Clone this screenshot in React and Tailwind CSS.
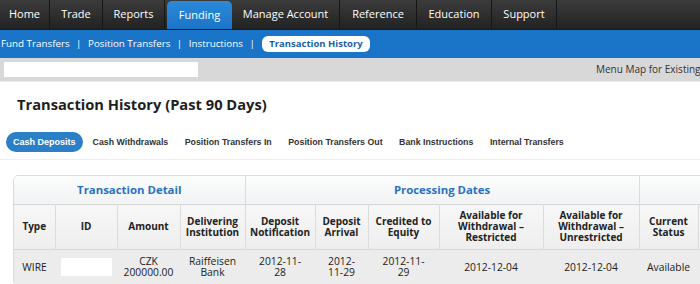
import React from "react";

const navTabs = [
  { label: "Home", w: "w-[50px]" },
  { label: "Trade", w: "w-[53px]" },
  { label: "Reports", w: "w-[62px]" },
  { label: "Funding", w: "w-[65px]", active: true },
  { label: "Manage Account", w: "w-[108px]" },
  { label: "Reference", w: "w-[77px]" },
  { label: "Education", w: "w-[75px]" },
  { label: "Support", w: "w-[65px]" },
];

const subTabs = ["Cash Withdrawals", "Position Transfers In", "Position Transfers Out", "Bank Instructions", "Internal Transfers"];

// column headers for the deposits table
const columns = [
  { w: "w-[41px]", label: ["Type"] },
  { w: "w-[62px]", label: ["ID"] },
  { w: "w-[63px]", label: ["Amount"] },
  { w: "w-[65px]", label: ["Delivering", "Institution"] },
  { w: "w-[70px]", label: ["Deposit", "Notification"] },
  { w: "w-[53px]", label: ["Deposit", "Arrival"] },
  { w: "w-[71px]", label: ["Credited to", "Equity"] },
  { w: "w-[104px]", label: ["Available for", "Withdrawal \u2013", "Restricted"] },
  { w: "w-[96px]", label: ["Available for", "Withdrawal \u2013", "Unrestricted"] },
  { w: "w-[59px]", label: ["Current", "Status"] },
  { w: "w-[60px]", label: [""] },
];

const row = [
  ["WIRE"],
  null,
  ["CZK", "200000.00"],
  ["Raiffeisen", "Bank"],
  ["2012-11-", "28"],
  ["2012-", "11-29"],
  ["2012-11-", "29"],
  ["2012-12-04"],
  ["2012-12-04"],
  ["Available"],
  [""],
];

const Lines = ({ lines }) =>
  lines.map((l, i) => (
    <React.Fragment key={i}>
      {i > 0 && <br />}
      {l}
    </React.Fragment>
  ));

export default function App() {
  return (
    <div className="w-[700px] h-[284px] overflow-hidden bg-white font-['Open_Sans',sans-serif] text-[#333]">
      {/* Main nav */}
      <div className="flex h-[30px] bg-gradient-to-b from-[#3c3c3c] to-[#222] border-b border-[#1a1a1a]">
        {navTabs.map((t) =>
          t.active ? (
            <div
              key={t.label}
              className={`${t.w} ml-[2px] mt-[1px] flex items-center justify-center rounded-t-[5px] bg-gradient-to-b from-[#2b8ad9] to-[#1a74c8] text-[11px] text-white`}
            >
              {t.label}
            </div>
          ) : (
            <div
              key={t.label}
              className={`${t.w} flex items-center justify-center border-r border-[#161616] text-[11px] text-white`}
            >
              {t.label}
            </div>
          )
        )}
      </div>

      {/* Funding sub nav */}
      <div className="flex h-[28px] items-center gap-[6.5px] bg-[#1a74c8] pl-[1px] text-[9.8px] text-white">
        <span>Fund Transfers</span>
        <span>|</span>
        <span>Position Transfers</span>
        <span>|</span>
        <span>Instructions</span>
        <span>|</span>
        <span className="ml-[1px] rounded-[6px] bg-white px-[7px] py-[1px] text-[9.5px] font-bold text-[#1c5fa5]">
          Transaction History
        </span>
      </div>

      {/* Account bar */}
      <div className="flex h-[24px] items-center whitespace-nowrap border-b border-[#ebebeb] bg-[#d8d8d8] pl-[4px]">
        <div className="h-[15px] w-[194px] shrink-0 bg-white"></div>
        <span className="ml-[398px] text-[10px] text-[#333]">Menu Map for Existing Users</span>
      </div>

      <h1 className="px-[17px] pt-[11px] text-[14.7px] font-bold text-[#1e1e1e]">
        Transaction History (Past 90 Days)
      </h1>

      {/* Transaction type tabs */}
      <div className="mt-[17px] flex items-center border-b border-[#eeeeee] px-[6px] pb-[7px] font-['Liberation_Sans',sans-serif] text-[8.8px] font-bold leading-[12px] text-[#333]">
        <span className="mr-[10px] rounded-full bg-[#2b7fc6] px-[7px] py-[4px] text-[9px] text-white">Cash Deposits</span>
        <div className="flex gap-[16.5px]">
          {subTabs.map((s) => (
            <span key={s}>{s}</span>
          ))}
        </div>
      </div>

      {/* Table */}
      <div className="ml-[13px] mt-[15px] w-[746px] overflow-hidden rounded-[5px] border border-[#dcdcdc]">
        <table className="w-[744px] table-fixed border-collapse text-center">
          <colgroup>
            {columns.map((c, i) => (
              <col key={i} className={c.w} />
            ))}
          </colgroup>
          <thead>
            <tr className="h-[28px] bg-gradient-to-b from-[#fbfcfc] to-[#f1f3f4] text-[11.4px] font-bold text-[#2a72c0]">
              <th colSpan={4} className="border-r border-[#dcdcdc] font-bold">
                Transaction Detail
              </th>
              <th colSpan={5} className="border-r border-[#dcdcdc] font-bold">
                Processing Dates
              </th>
              <th colSpan={2}></th>
            </tr>
            <tr className="h-[45px] border-t border-[#d6d6d6] bg-gradient-to-b from-[#f7f7f7] to-[#eeeeee] text-[10px] font-bold leading-[10.7px] text-[#222]">
              {columns.map((c, i) => (
                <th key={i} className="border-r border-[#dcdcdc] px-[1px] font-bold">
                  <Lines lines={c.label} />
                </th>
              ))}
            </tr>
          </thead>
          <tbody>
            <tr className="h-[36px] border-t border-[#d6d6d6] bg-[#ececec] text-[10.3px] leading-[11.5px] text-[#222]">
              {row.map((cell, i) => (
                <td key={i} className="px-[1px]">
                  {cell ? <Lines lines={cell} /> : <div className="mx-auto h-[18px] w-[51px] bg-white"></div>}
                </td>
              ))}
            </tr>
          </tbody>
        </table>
      </div>
    </div>
  );
}
